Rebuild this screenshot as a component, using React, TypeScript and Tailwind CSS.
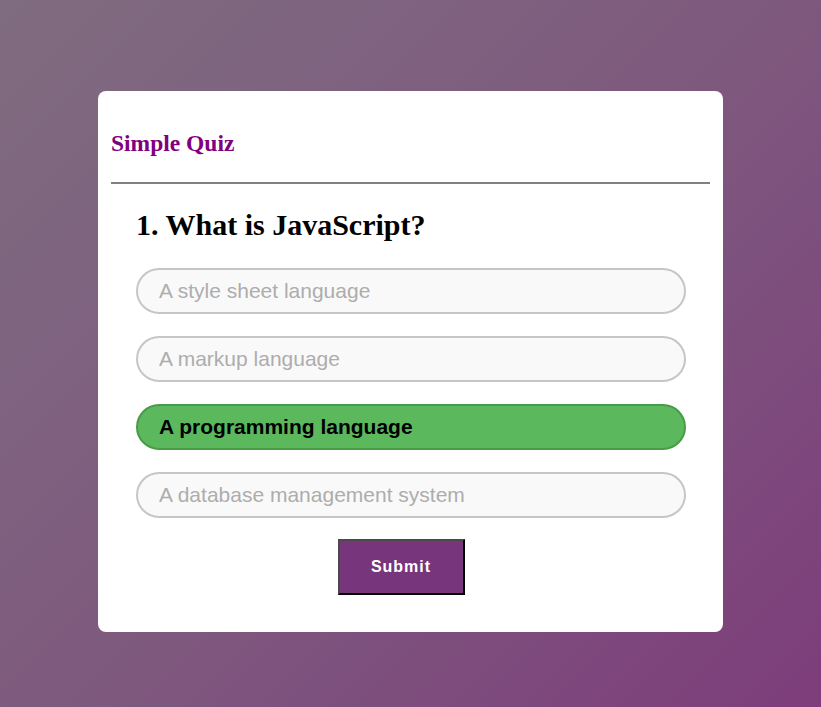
import { useState } from "react";

const OPTIONS = [
  "A style sheet language",
  "A markup language",
  "A programming language",
  "A database management system",
];

export default function App() {
  const [picked, setPicked] = useState(2);

  return (
    <div className="min-h-[707px] w-full bg-[linear-gradient(135deg,#7f6c80_0%,#7e5a7e_50%,#7d3d7b_100%)] pt-[91px]">
      <div className="mx-auto w-[625px] rounded-[8px] bg-white px-[13px] pb-[37px]">
        {/* Header */}
        <div className="pt-[39px] pb-[25px]">
          <h1 className="font-['Liberation_Serif',serif] text-[23.5px] font-bold leading-[27px] text-[#800080]">
            Simple Quiz
          </h1>
        </div>
        <div className="h-[2px] bg-[#808080]" />

        {/* Question */}
        <div className="px-[25px] pt-[24px]">
          <h2 className="font-['Liberation_Serif',serif] text-[30px] font-bold leading-[34px] text-black">
            1. What is JavaScript?
          </h2>
          <div className="mt-[26px] flex flex-col gap-[22px]">
            {OPTIONS.map((opt, i) => (
              <button
                key={opt}
                onClick={() => setPicked(i)}
                className={`h-[46px] w-[550px] rounded-full border-2 pl-[21px] text-left font-['Liberation_Sans',Arial,sans-serif] text-[21px] ${
                  i === picked
                    ? "border-[#479c47] bg-[#5cb85c] font-bold text-black"
                    : "border-[#c6c6c6] bg-[#f9f9f9] text-[#adadad]"
                }`}
              >
                {opt}
              </button>
            ))}
          </div>
          <div className="mt-[21px] flex justify-center pr-[19px]">
            <button className="h-[56px] w-[127px] border-2 border-t-[#4a4a4a] border-l-[#4a4a4a] border-r-black border-b-black bg-[#77357b] font-['Liberation_Sans',Arial,sans-serif] text-[16px] font-bold tracking-[1px] text-white">
              Submit
            </button>
          </div>
        </div>
      </div>
    </div>
  );
}
